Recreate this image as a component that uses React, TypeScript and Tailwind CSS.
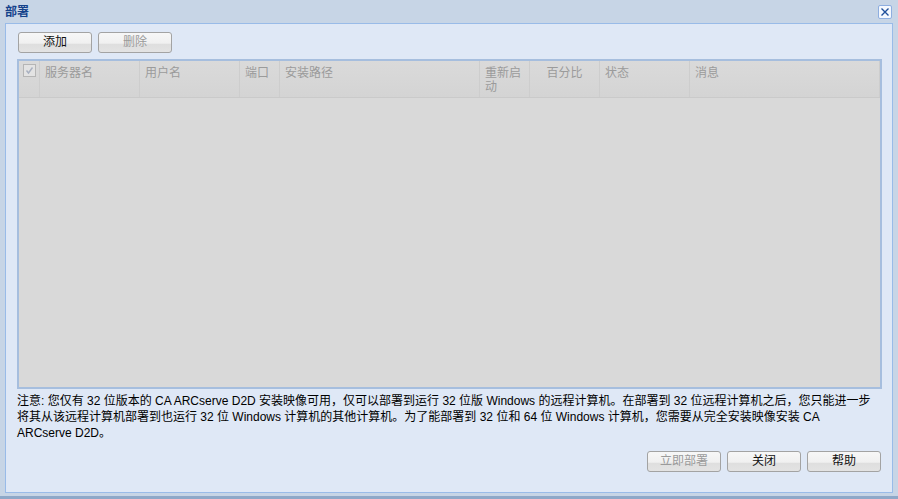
import React from 'react';

const font = { fontFamily: '"Liberation Sans", "Noto Sans CJK SC", sans-serif' };

const columns = [
  { label: '服务器名', w: 'w-[100px]' },
  { label: '用户名', w: 'w-[100px]' },
  { label: '端口', w: 'w-[40px]' },
  { label: '安装路径', w: 'w-[200px]' },
  { label: '重新启动', w: 'w-[50px]' },
  { label: '百分比', w: 'w-[70px]', center: true },
  { label: '状态', w: 'w-[90px]' },
  { label: '消息', w: 'flex-1' },
];

const Btn = ({ label, disabled }: { label: string; disabled?: boolean }) => (
  <button
    className={`w-[74px] h-[21px] rounded-[3px] border border-[#a3a3a3] bg-[linear-gradient(#f7f7f7_0%,#f0f0f0_55%,#dedede_56%,#e3e3e3_100%)] text-[12px] leading-[19px] ${
      disabled ? 'text-[#9a9a9a]' : 'text-[#111]'
    }`}
  >
    {label}
  </button>
);

export default function App() {
  return (
    <div className="w-[898px] h-[499px] bg-[#c7d5e6] flex flex-col border-b-[3px] border-[#8ea8c8]" style={font}>
      {/* title bar */}
      <div className="h-[23px] flex items-center justify-between pl-[5px] pr-[6px]">
        <span className="text-[12px] font-bold text-[#15428b]">部署</span>
        <div className="w-[14px] h-[14px] rounded-[2px] border border-[#8eaee0] bg-[#f4f8fe] flex items-center justify-center">
          <svg width="10" height="10" viewBox="0 0 10 10">
            <path d="M1.5 1.5 L8.5 8.5 M8.5 1.5 L1.5 8.5" stroke="#1f4f9a" strokeWidth="1.4" />
          </svg>
        </div>
      </div>

      {/* body panel */}
      <div className="mx-[5px] mb-[3px] flex-1 border border-[#99bbe8] bg-[#dfe8f6] pt-[8px] pl-[11px] pr-[10px] flex flex-col">
        <div className="flex gap-[6px] pl-[1px]">
          <Btn label="添加" />
          <Btn label="删除" disabled />
        </div>

        {/* grid */}
        <div className="mt-[6px] h-[330px] border-2 border-[#a6bede] bg-[#d9d9d9] flex flex-col">
          <div className="h-[37px] flex bg-[linear-gradient(#dadada,#d4d4d4)] border-b border-[#cacaca] text-[12px] leading-[14px] text-[#9b9b9b]">
            <div className="w-[21px] border-r border-[#cdcdcd] flex justify-center pt-[3px]">
              <div className="w-[13px] h-[13px] border border-[#b5b5b5] bg-[#e3e3e3] flex items-center justify-center">
                <svg width="9" height="9" viewBox="0 0 9 9">
                  <path d="M1.5 4.5 L3.5 7 L7.5 1.5" stroke="#a8b0c0" strokeWidth="1.4" fill="none" />
                </svg>
              </div>
            </div>
            {columns.map((c) => (
              <div
                key={c.label}
                className={`${c.w} border-r border-[#cdcdcd] px-[5px] pt-[5px] ${c.center ? 'text-center' : ''}`}
              >
                {c.label === '重新启动' ? (
                  <>
                    重新启
                    <br />动
                  </>
                ) : (
                  c.label
                )}
              </div>
            ))}
          </div>
          <div className="flex-1" />
        </div>

        {/* notice */}
        <div className="mt-[4px] text-[12px] leading-[16px] text-black">
          <div>注意: 您仅有 32 位版本的 CA ARCserve D2D 安装映像可用，仅可以部署到运行 32 位版 Windows 的远程计算机。在部署到 32 位远程计算机之后，您只能进一步</div>
          <div>将其从该远程计算机部署到也运行 32 位 Windows 计算机的其他计算机。为了能部署到 32 位和 64 位 Windows 计算机，您需要从完全安装映像安装 CA</div>
          <div>ARCserve D2D。</div>
        </div>

        <div className="flex justify-end gap-[6px] mt-[10px] pr-[1px]">
          <Btn label="立即部署" disabled />
          <Btn label="关闭" />
          <Btn label="帮助" />
        </div>
      </div>
    </div>
  );
}
